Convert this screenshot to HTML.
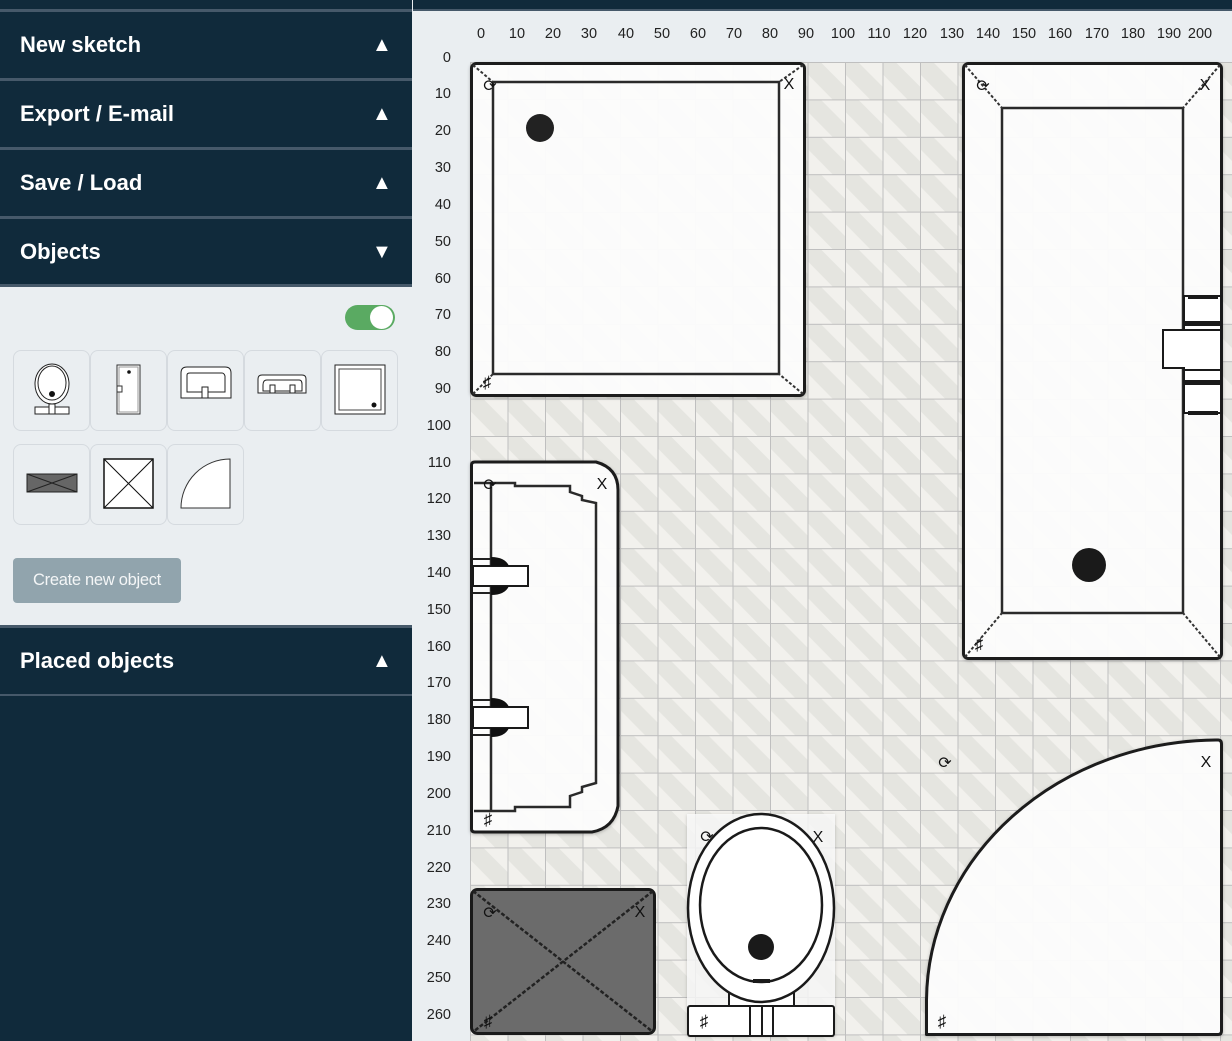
<!DOCTYPE html>
<html><head><meta charset="utf-8"><style>
html,body{margin:0;padding:0;width:1232px;height:1041px;overflow:hidden;background:#eaeef1;font-family:"Liberation Sans",Arial,sans-serif}
#side{position:absolute;left:0;top:0;width:412px;height:1041px;background:#102a3b}
.hd{position:absolute;left:0;width:412px;height:68px;color:#fff;font-weight:bold;font-size:22px;line-height:66px;border-top:3px solid #46596a;box-sizing:content-box}
.hd span{position:absolute;left:20px;top:0}
.hd i{position:absolute;left:372px;top:0;font-style:normal;font-size:20px}
#panel{position:absolute;left:0;top:287px;width:412px;height:341px;background:#eaeef1}
.tile{position:absolute;width:75px;height:80px;border:1px solid #d5dadf;border-radius:8px;background:#eaeef1;box-sizing:border-box}
.tile svg{position:absolute;left:0;top:0}
#btn{position:absolute;left:13px;top:558px;width:168px;height:45px;background:#91a4ad;border-radius:4px;color:#f4f6f7;font-size:16.5px;line-height:45px;text-align:center;letter-spacing:-0.3px}
#tog{position:absolute;left:345px;top:305px;width:50px;height:25px;border-radius:13px;background:#5aaa62}
#tog b{position:absolute;right:2px;top:1px;width:23px;height:23px;border-radius:50%;background:#fff}
#cv{position:absolute;left:413px;top:0}
</style></head><body>
<div id="side">
 <div class="hd" style="top:9px"><span>New sketch</span><i>▲</i></div>
 <div class="hd" style="top:78px"><span>Export / E-mail</span><i>▲</i></div>
 <div class="hd" style="top:147px"><span>Save / Load</span><i>▲</i></div>
 <div class="hd" style="top:216px"><span>Objects</span><i>▼</i></div>
 <div style="position:absolute;left:0;top:284px;width:412px;height:3px;background:#46596a"></div>
 <div id="panel"></div>
 <div id="tog"><b></b></div>
 <div class="tile" style="left:13px;top:350px;width:77px;height:81px"><svg width="77" height="81"><ellipse cx="38" cy="33" rx="17" ry="20" fill="#fff" stroke="#222" stroke-width="1"/><ellipse cx="38" cy="32" rx="14" ry="17" fill="#fff" stroke="#222" stroke-width="1"/><circle cx="38" cy="43" r="3" fill="#111"/><rect x="21" y="56" width="34" height="7" fill="#fff" stroke="#222"/><rect x="35" y="53" width="6" height="10" fill="#fff" stroke="#222"/></svg></div>
 <div class="tile" style="left:90px;top:350px;width:77px;height:81px"><svg width="77" height="81"><rect x="26" y="14" width="23" height="49" fill="#fff" stroke="#333"/><rect x="28" y="16" width="19" height="45" fill="none" stroke="#999"/><circle cx="38" cy="21" r="1.8" fill="#111"/><rect x="26" y="35" width="5" height="6" fill="#fff" stroke="#333"/></svg></div>
 <div class="tile" style="left:167px;top:350px;width:77px;height:81px"><svg width="77" height="81"><path d="M13 22 Q13 16 19 16 H57 Q63 16 63 22 V47 H13 Z" fill="#fff" stroke="#222"/><path d="M19 29 V24 Q19 22 22 22 H54 Q56 22 57 25 V41 H19 Z" fill="none" stroke="#222"/><rect x="34" y="36" width="6" height="11" fill="#fff" stroke="#222"/></svg></div>
 <div class="tile" style="left:244px;top:350px;width:77px;height:81px"><svg width="77" height="81"><path d="M13 28 Q13 24 17 24 H57 Q61 24 61 28 V42 H13 Z" fill="#fff" stroke="#222"/><path d="M18 34 Q18 29 22 29 H54 Q57 29 57 33 V40 H18 Z" fill="none" stroke="#222"/><rect x="25" y="34" width="5" height="8" fill="#fff" stroke="#222"/><rect x="45" y="34" width="5" height="8" fill="#fff" stroke="#222"/></svg></div>
 <div class="tile" style="left:321px;top:350px;width:77px;height:81px"><svg width="77" height="81"><rect x="13" y="14" width="50" height="49" fill="#fff" stroke="#222"/><rect x="17" y="18" width="42" height="41" fill="none" stroke="#444"/><circle cx="52" cy="54" r="2.5" fill="#111"/></svg></div>
 <div class="tile" style="left:13px;top:444px;width:77px;height:81px"><svg width="77" height="81"><rect x="13" y="29" width="50" height="18" fill="#666" stroke="#222"/><path d="M13 29 L63 47 M13 47 L63 29" stroke="#222"/></svg></div>
 <div class="tile" style="left:90px;top:444px;width:77px;height:81px"><svg width="77" height="81"><rect x="13" y="14" width="49" height="49" fill="#fff" stroke="#111" stroke-width="1.5"/><path d="M13 14 L62 63 M13 63 L62 14" stroke="#111"/></svg></div>
 <div class="tile" style="left:167px;top:444px;width:77px;height:81px"><svg width="77" height="81"><path d="M13 63 A49 49 0 0 1 62 14 V63 Z" fill="#fff" stroke="#333"/></svg></div>
 <div id="btn">Create new object</div>
 <div class="hd" style="top:625px"><span>Placed objects</span><i>▲</i></div>
 <div style="position:absolute;left:0;top:694px;width:412px;height:2px;background:#46596a"></div>
</div>

<svg id="cv" width="819" height="1041" viewBox="413 0 819 1041" font-family="Liberation Sans, Arial, sans-serif">
<defs>
 <pattern id="gp" x="470" y="62" width="37.5" height="37.4" patternUnits="userSpaceOnUse">
  <rect width="37.5" height="37.4" fill="#f2f1ed"/>
  <path d="M0 0 L13 0 L37.5 24.5 L37.5 37.4 L25 37.4 L0 12 Z" fill="#e5e5e0"/>
  <path d="M0 0 H37.5 M0 0 V37.4" stroke="#bfbfbf" stroke-width="2"/>
 </pattern>
 <filter id="sh" x="-5%" y="-5%" width="110%" height="110%"><feDropShadow dx="0" dy="1" stdDeviation="1.5" flood-opacity="0.25"/></filter>
</defs>
<rect x="413" y="0" width="819" height="1041" fill="#eaeef1"/>
<rect x="413" y="0" width="819" height="10" fill="#102a3b"/>
<rect x="413" y="9" width="819" height="2" fill="#46596a"/>
<rect x="470" y="62" width="762" height="979" fill="url(#gp)"/>

<g font-size="14.5" fill="#222" text-anchor="middle">
<text x="481" y="38">0</text><text x="517" y="38">10</text><text x="553" y="38">20</text><text x="589" y="38">30</text><text x="626" y="38">40</text><text x="662" y="38">50</text><text x="698" y="38">60</text><text x="734" y="38">70</text><text x="770" y="38">80</text><text x="806" y="38">90</text><text x="843" y="38">100</text><text x="879" y="38">110</text><text x="915" y="38">120</text><text x="952" y="38">130</text><text x="988" y="38">140</text><text x="1024" y="38">150</text><text x="1060" y="38">160</text><text x="1097" y="38">170</text><text x="1133" y="38">180</text><text x="1169" y="38">190</text><text x="1200" y="38">200</text>
</g>
<g font-size="14.5" fill="#222" text-anchor="end">
<text x="451" y="62">0</text><text x="451" y="98">10</text><text x="451" y="135">20</text><text x="451" y="172">30</text><text x="451" y="209">40</text><text x="451" y="246">50</text><text x="451" y="283">60</text><text x="451" y="319">70</text><text x="451" y="356">80</text><text x="451" y="393">90</text><text x="451" y="430">100</text><text x="451" y="467">110</text><text x="451" y="503">120</text><text x="451" y="540">130</text><text x="451" y="577">140</text><text x="451" y="614">150</text><text x="451" y="651">160</text><text x="451" y="687">170</text><text x="451" y="724">180</text><text x="451" y="761">190</text><text x="451" y="798">200</text><text x="451" y="835">210</text><text x="451" y="872">220</text><text x="451" y="908">230</text><text x="451" y="945">240</text><text x="451" y="982">250</text><text x="451" y="1019">260</text>
</g>

<!-- shower tray -->
<g filter="url(#sh)">
<rect x="471.5" y="63.5" width="333" height="332" rx="5" fill="#fdfdfd" fill-opacity="0.97" stroke="#1a1a1a" stroke-width="3"/>
</g>
<rect x="493" y="82" width="286" height="292" fill="none" stroke="#2a2a2a" stroke-width="2.5"/>
<path d="M473 65 L493 82 M803 65 L779 82 M473 394 L493 374 M803 394 L779 374" stroke="#333" stroke-width="2" stroke-dasharray="3 2"/>
<circle cx="540" cy="128" r="14" fill="#222"/>

<!-- bathtub -->
<g filter="url(#sh)">
<rect x="963.5" y="63.5" width="258" height="595" rx="5" fill="#fdfdfd" fill-opacity="0.97" stroke="#1a1a1a" stroke-width="3"/>
</g>
<rect x="1002" y="108" width="181" height="505" fill="none" stroke="#2a2a2a" stroke-width="2.5"/>
<path d="M965 65 L1002 108 M1220 65 L1183 108 M965 657 L1002 613 M1220 657 L1183 613" stroke="#333" stroke-width="2" stroke-dasharray="3 2"/>
<circle cx="1089" cy="565" r="17" fill="#1a1a1a"/>
<g stroke="#1a1a1a" fill="#fff" stroke-width="2">
<rect x="1184" y="296" width="37" height="34"/>
<rect x="1184" y="370" width="37" height="43"/>
<path d="M1184 330 H1163 V368 H1184 V370 H1221 V330 Z"/>
</g>
<g fill="#1a1a1a"><rect x="1188" y="295" width="30" height="4"/><rect x="1185" y="321" width="35" height="5"/><rect x="1185" y="380" width="35" height="5"/><rect x="1188" y="411" width="30" height="4"/></g>

<!-- vanity -->
<g filter="url(#sh)">
<path d="M471.5 465 Q471.5 462 475 462 H596 Q618 468 618 490 V806 Q614 828 592 832 H475 Q471.5 832 471.5 829 Z" fill="#fdfdfd" fill-opacity="0.97" stroke="#1a1a1a" stroke-width="3"/>
</g>
<path d="M491 483 V811 M474 483 H515 V486 H570 V492 L582 496 V500 L596 503 V783 L582 787 V792 L570 796 V807 H515 V811 H474" fill="none" stroke="#2a2a2a" stroke-width="2.5"/>
<g stroke="#1a1a1a" stroke-width="2" fill="#fff">
<rect x="473" y="566" width="55" height="20"/><rect x="473" y="707" width="55" height="21"/>
</g>
<path d="M491 557 Q505 557 509 566 H491 Z M491 595 Q505 595 509 586 H491 Z M491 698 Q505 698 509 707 H491 Z M491 737 Q505 737 509 728 H491 Z" fill="#111"/>
<path d="M473 559 H491 M473 593 H491 M473 700 H491 M473 735 H491" stroke="#222" stroke-width="2"/>

<!-- dark box -->
<rect x="471.5" y="889.5" width="183" height="144" rx="6" fill="#6b6b6b" stroke="#1a1a1a" stroke-width="3"/>
<path d="M473 891 L653 1032 M653 891 L473 1032" stroke="#222" stroke-width="2.5" stroke-dasharray="4 2"/>

<!-- toilet -->
<rect x="687" y="814" width="148" height="222" fill="#fbfbfb" fill-opacity="0.8" filter="url(#sh)"/>
<rect x="729" y="985" width="65" height="22" fill="#fff" stroke="#1a1a1a" stroke-width="2"/>
<ellipse cx="761" cy="908" rx="73" ry="94" fill="#fff" stroke="#1a1a1a" stroke-width="2.5"/>
<ellipse cx="761" cy="905" rx="61" ry="77" fill="#fff" stroke="#1a1a1a" stroke-width="2.5"/>
<circle cx="761" cy="947" r="13" fill="#1a1a1a"/>
<rect x="753" y="979" width="17" height="4" fill="#1a1a1a"/>
<rect x="688" y="1006" width="146" height="30" rx="2" fill="#fff" stroke="#1a1a1a" stroke-width="2"/>
<path d="M750 1006 V1036 M762 1006 V1036 M773 1006 V1036" stroke="#1a1a1a" stroke-width="2"/>

<!-- quarter circle -->
<g filter="url(#sh)">
<path d="M926.5 1034.5 V1000 A292 262 0 0 1 1216 740 H1218 Q1221.5 740 1221.5 744 V1031 Q1221.5 1034.5 1218 1034.5 Z" fill="#fdfdfd" fill-opacity="0.97" stroke="#1a1a1a" stroke-width="3" stroke-linejoin="round"/>
</g>

<!-- handle icons -->
<g font-size="16" fill="#111" text-anchor="middle">
<text x="490" y="91">⟳</text><text x="789" y="89">X</text><text x="487" y="388" font-size="17">♯</text>
<text x="983" y="91">⟳</text><text x="1205" y="90">X</text><text x="979" y="650" font-size="17">♯</text>
<text x="490" y="490">⟳</text><text x="602" y="489">X</text><text x="488" y="825" font-size="17">♯</text>
<text x="490" y="918">⟳</text><text x="640" y="917">X</text><text x="488" y="1027" font-size="17">♯</text>
<text x="707" y="842">⟳</text><text x="818" y="842">X</text><text x="704" y="1027" font-size="17">♯</text>
<text x="945" y="768">⟳</text><text x="1206" y="767">X</text><text x="942" y="1027" font-size="17">♯</text>
</g>
</svg>
</body></html>
